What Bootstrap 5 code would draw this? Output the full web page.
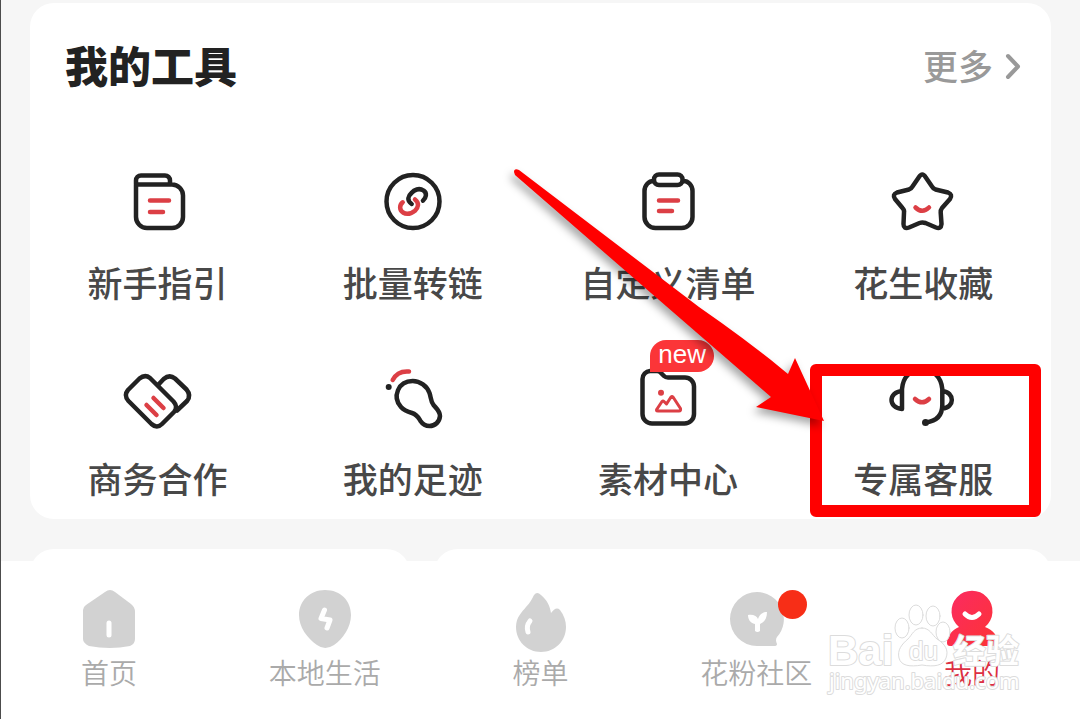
<!DOCTYPE html>
<html lang="zh-CN">
<head>
<meta charset="utf-8">
<meta name="viewport" content="width=device-width, initial-scale=1">
<title>我的工具</title>
<link href="https://cdn.jsdelivr.net/npm/bootstrap@5.3.0/dist/css/bootstrap.min.css" rel="stylesheet">
<style>
  body { background: #f6f6f6; font-family: "Liberation Sans", "Noto Sans CJK SC", sans-serif; border-left: 1px solid #4c4c4c; }
  a { color: inherit; text-decoration: none; }
  svg { fill: none; stroke-linecap: round; stroke-linejoin: round; overflow: visible; }
  .panel { background: #fff; border-radius: 24px; }
  .tools-panel { margin: 3px 29px 0; padding-bottom: 14px; }
  .tools-head { padding: 33px 26px 62px 35px; }
  .tools-title { font-size: 43px; line-height: 64px; font-weight: 900; color: #222; }
  .more-link { font-size: 35px; line-height: 64px; font-weight: 500; color: #999; }
  .tool-grid { row-gap: 49px; }
  .tool-item { color: #484848; font-size: 35px; line-height: 48px; font-weight: 500; }
  .tool-icon { width: 80px; height: 80px; margin-bottom: 19px; stroke: #222; stroke-width: 4.5; }
  .tool-icon .accent { stroke: #dc3f45; }
  .new-tag { left: 22px; top: -18px; width: 64px; height: 32px; border-radius: 16px 16px 16px 0; background: #fb3538; color: #fff; font-size: 26px; line-height: 28px; font-weight: 400; }
  .frame-mark { inset: 6px 10px -12px 14px; border: 12px solid #f00; border-radius: 6px; }
  .arrow-mark { left: -290px; top: -197px; width: 330px; height: 270px; filter: drop-shadow(-3px 5px 4px rgba(0, 0, 0, .35)); }
  .mark-layer { pointer-events: none; z-index: 2; }
  .peek-row { height: 42px; padding: 30px 29px 0; overflow: hidden; }
  .peek-narrow { width: 380px; height: 80px; }
  .peek-wide { height: 80px; }
  .tab-bar { background: #fff; padding: 26px 0 24px; }
  .tab-item { color: #aaa; font-size: 28px; line-height: 42px; font-weight: 350; }
  .tab-item.active { color: #dc2f42; }
  .tab-icon { width: 64px; height: 64px; margin-bottom: 3px; fill: #d2d2d2; }
  .tab-icon .cut { fill: none; stroke: #fff; stroke-width: 5; }
  .red-dot { left: 54px; top: 3px; width: 29px; height: 29px; background: #f72e17; }
  .site-mark { right: 56px; bottom: 16px; width: 200px; height: 104px; fill: #fff; stroke: #dcdcdc; stroke-width: 1; }
  .site-mark text { paint-order: stroke; stroke-width: 2; }
</style>
</head>
<body class="d-flex flex-column min-vh-100">
<main class="flex-grow-1">
  <section class="panel tools-panel">
    <header class="tools-head d-flex justify-content-between">
      <h1 class="tools-title m-0">我的工具</h1>
      <a href="#" class="more-link d-flex align-items-center gap-2">更多
        <svg width="24" height="30" viewBox="0 0 24 30" stroke="#999" stroke-width="4"><path d="M7 3 17 13.500 7 24"/></svg>
      </a>
    </header>
    <nav class="tool-grid row row-cols-4 g-0 text-center">
      <a href="#" class="tool-item col d-flex flex-column align-items-center">
        <svg class="tool-icon" viewBox="0 0 80 80"><path d="M18 22V18.500a5 5 0 0 1 5-5H47a5 5 0 0 1 5 5V22M18 22.500H54a11 11 0 0 1 11 11V55a11 11 0 0 1-11 11H29a11 11 0 0 1-11-11z"/><path class="accent" d="M32 38.500H51M32 50H45"/></svg>
        <span>新手指引</span>
      </a>
      <a href="#" class="tool-item col d-flex flex-column align-items-center">
        <svg class="tool-icon" viewBox="0 0 80 80"><circle cx="40" cy="39.500" r="26.500"/><path d="M50 38.700C53 36 54.500 31 50.500 28.500 46 25.500 41 28 38.700 30.700 35 34 33.500 38.500 38.700 42"/><path class="accent" d="M29.700 40.300C26 43.500 26.500 48 30 50.500 34 53 39 51 42 48.700 45.500 45 46.500 41 42 37.500"/></svg>
        <span>批量转链</span>
      </a>
      <a href="#" class="tool-item col d-flex flex-column align-items-center">
        <svg class="tool-icon" viewBox="0 0 80 80"><path d="M26 19a9 10 0 0 0-9.500 10V55a11 11 0 0 0 11 11H53.500a11 11 0 0 0 11-11V29a9 10 0 0 0-9.500-10"/><rect x="26" y="12.500" width="28.500" height="10.500" rx="5"/><path class="accent" d="M31 38.500H50M31 49H44"/></svg>
        <span>自定义清单</span>
      </a>
      <a href="#" class="tool-item col d-flex flex-column align-items-center">
        <svg class="tool-icon" viewBox="0 0 80 80"><path d="M36 15Q39.300 10 42.500 15L49 24.500Q50 26.500 52.500 27.500L65 30.500Q70 32.500 67 37L59 46Q57.500 48 57.700 50.500L58.500 62Q58 67.500 53 65.500L42.500 61Q39.300 60 36.500 61L26 65.500Q20.500 67.500 20.500 62L21 50.500Q21.500 48 19.500 46L12 37Q9 32.500 14 30.500L26 27.500Q28.500 26.500 29.500 24.500Z"/><path class="accent" d="M32.500 45.500Q39.300 52 46 45.500"/></svg>
        <span>花生收藏</span>
      </a>
      <a href="#" class="tool-item col d-flex flex-column align-items-center">
        <svg class="tool-icon" viewBox="0 0 80 80"><path d="M40.500 26.500 45.700 21Q51.500 16 57 20.500L68.500 31.500Q73.500 37.500 69 43L59 52.500"/><path d="M32 20 55.500 43.500Q60.500 49 56 54L44 66Q39 71 33.500 66L10.500 43Q5.500 37.500 10 32L21.500 20.500Q27 16 32 20z"/><path class="accent" d="M35.500 40 45.500 50M28.500 47 38.500 57"/></svg>
        <span>商务合作</span>
      </a>
      <a href="#" class="tool-item col d-flex flex-column align-items-center">
        <svg class="tool-icon" viewBox="0 0 80 80"><path d="M39.700 23C47 23 54 28 56.500 35 58 39 57.500 43 60.500 47 63 50 67 53 67 58 66.500 64 62 68 56.500 68 52 68 49.500 66 47.500 63 45 59 44 56.500 39 55 34 53.500 31 52.500 28 49 19 39 25 23 39.700 23z"/><circle cx="15.700" cy="29" r="3" fill="#222" stroke="none"/><path class="accent" d="M19.700 22Q24.500 12.500 36 13.500"/></svg>
        <span>我的足迹</span>
      </a>
      <a href="#" class="tool-item col d-flex flex-column align-items-center">
        <span class="position-relative d-flex">
          <svg class="tool-icon" viewBox="0 0 80 80"><path d="M22 13H29Q31.500 13 33 15L36 18Q37.500 19.500 40 19.500H57a9 9 0 0 1 9 9V56a9.500 9.500 0 0 1-9.500 9.500H24a9.500 9.500 0 0 1-9.500-9.500V21a8 8 0 0 1 7.500-8z"/><path class="accent" stroke-width="3" d="M29 51 34 43.500Q35 42.500 36 43.500L38.500 46 43 39Q44 38 45 39L52.500 50.500Q53 53 51 53H30Q27.500 53 29 51z"/><circle cx="33" cy="34.700" r="3" fill="#dc3f45" stroke="none"/></svg>
          <span class="new-tag position-absolute">new</span>
        </span>
        <span>素材中心</span>
      </a>
      <a href="#" class="tool-item col d-flex flex-column align-items-center position-relative">
        <svg class="tool-icon" viewBox="0 0 80 80"><path d="M19 51V31C20 19 27 12 39 12S58 19 59.300 31V47C59.300 57 54 63 43 64.500M19 33C5 34 5 50 19 51zM59.300 33C72 34 72 50 59.300 50.500"/><circle cx="42.500" cy="64.500" r="3.500" fill="#222" stroke="none"/><path class="accent" d="M32 41Q39 47.500 46 41"/></svg>
        <span>专属客服</span>
        <span class="frame-mark mark-layer position-absolute"></span>
        <svg class="arrow-mark mark-layer position-absolute" viewBox="0 0 330 270" aria-hidden="true"><path fill="#f00" d="M8 11Q8 7 13 9L193 146Q245 182 282 213L289 197 318 260 250 246 265 236 130 119 9 14Z"/></svg>
      </a>
    </nav>
  </section>
  <div class="peek-row d-flex gap-4">
    <div class="panel peek-narrow"></div>
    <div class="panel peek-wide flex-grow-1"></div>
  </div>
</main>
<footer class="position-relative">
  <nav class="tab-bar row row-cols-5 g-0 text-center">
    <a href="#" class="tab-item col d-flex flex-column align-items-center">
      <svg class="tab-icon" viewBox="0 0 64 64"><path d="M28 5Q33 1 38 5L54 17Q58 20 58 25V52Q58 57 53 59 33 63 12 59 6 56 6 52V23Q6 20 9 18z"/><path class="cut" d="M32 36V48"/></svg>
      <span>首页</span>
    </a>
    <a href="#" class="tab-item col d-flex flex-column align-items-center">
      <svg class="tab-icon" viewBox="0 0 64 64"><path d="M32 3C48 3 58 14 58 28 58 40 50 52 41 58Q32 64 24 58C14 51 6 40 6 28 6 14 17 3 32 3z"/><path class="cut" stroke-width="4" d="M31.500 23 28 31.500 37 33 34 41"/></svg>
      <span>本地生活</span>
    </a>
    <a href="#" class="tab-item col d-flex flex-column align-items-center">
      <svg class="tab-icon" viewBox="0 0 64 64"><path d="M26 8Q29 4 33 8C39 13 42 19 43 26 46 22 49 20 52 23 56 28 58 34 58 40 58 54 47 65 33 65S8 54 8 40C8 30 14 25 18 20 22 16 24 12 26 8z"/><path class="cut" d="M22 34Q18 39 20 45"/></svg>
      <span>榜单</span>
    </a>
    <a href="#" class="tab-item col d-flex flex-column align-items-center">
      <span class="position-relative d-flex">
        <svg class="tab-icon" viewBox="0 0 64 64"><path d="M33 5A27 27 0 0 1 53 50Q51 53 53 57 53 59 50 59H33A27 27 0 0 1 33 5z"/><path fill="#fff" d="M31 44V37C26 36 24 32 24 28 29 27 33 29 34 32 35 28 38 25 43 25 43 31 41 35 36 37V44Q33.500 46 31 44z"/></svg>
        <span class="red-dot position-absolute rounded-circle"></span>
      </span>
      <span>花粉社区</span>
    </a>
    <a href="#" class="tab-item active col d-flex flex-column align-items-center" aria-current="page">
      <svg class="tab-icon" viewBox="0 0 64 64"><defs><linearGradient id="meFill" x1="0" y1="0" x2="1" y2="1"><stop offset="0" stop-color="#fb2a62"/><stop offset="1" stop-color="#fd3434"/></linearGradient></defs><path fill="url(#meFill)" d="M19 40A20.500 20.500 0 1 1 45 40C53 43 58 49 58 56Q58 59 54 59H10Q7 59 7 56C7 49 12 43 19 40z"/><path class="cut" stroke-width="4" d="M25 27Q32 34 39 27"/></svg>
      <span>我的</span>
    </a>
  </nav>
  <svg class="site-mark mark-layer position-absolute" viewBox="0 0 200 104" role="img" aria-label="Baidu经验">
    <ellipse cx="78" cy="28" rx="7" ry="10"/><ellipse cx="92" cy="15" rx="7" ry="10"/><ellipse cx="109" cy="16" rx="7" ry="10"/><ellipse cx="119" cy="32" rx="7" ry="10"/>
    <path d="M98 28C106 28 108 35 113 39 121 44 125 50 122 58 119 66 110 67 98 65 86 67 77 66 75 58 73 50 78 44 84 39 88 35 90 28 98 28z"/>
    <text x="4" y="65" font-size="42" font-weight="700">Bai</text>
    <text x="85" y="60" font-size="26">du</text>
    <text x="129" y="63" font-size="33" font-weight="700">经验</text>
    <text x="5" y="89" font-size="22" font-family="Noto Sans, sans-serif">jingyan.baidu.com</text>
  </svg>
</footer>
<script src="https://cdn.jsdelivr.net/npm/bootstrap@5.3.0/dist/js/bootstrap.bundle.min.js"></script>
</body>
</html>
